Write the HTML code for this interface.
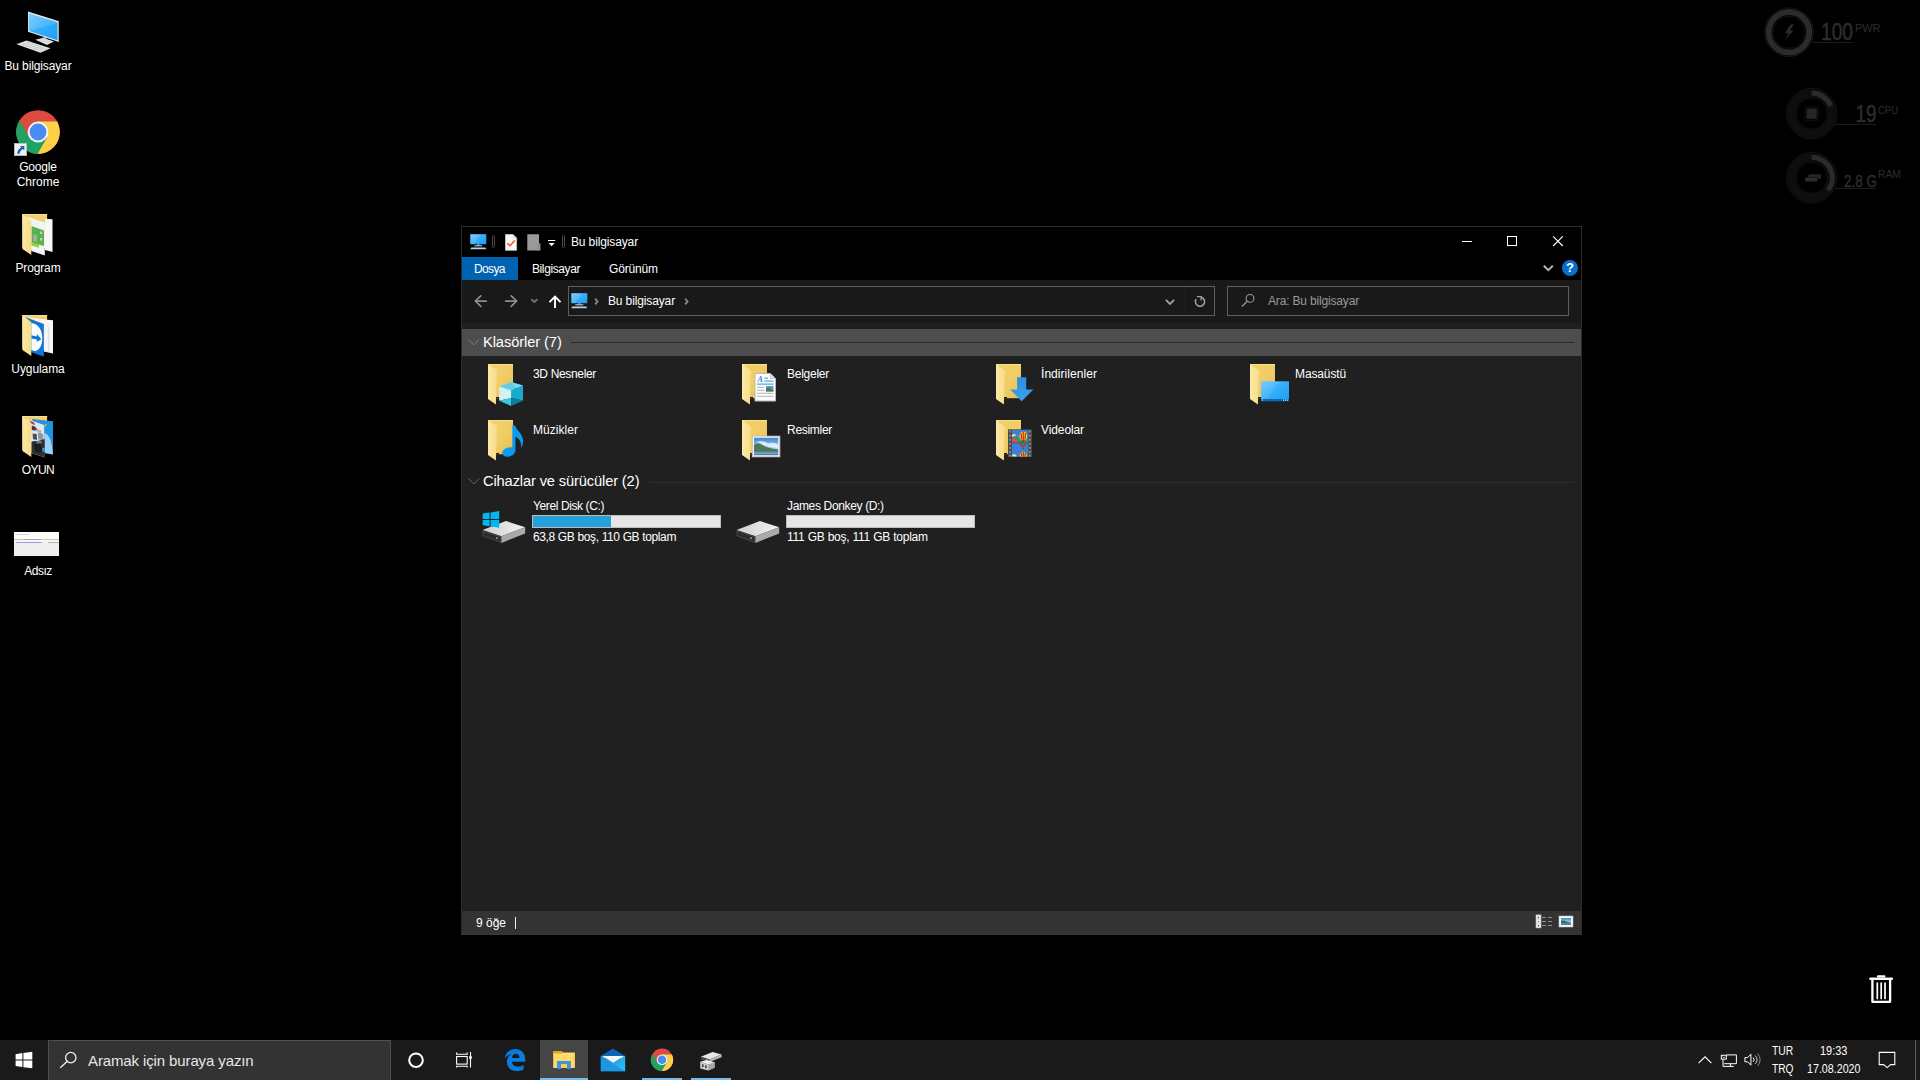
<!DOCTYPE html>
<html>
<head>
<meta charset="utf-8">
<title>Bu bilgisayar</title>
<style>
*{box-sizing:border-box;margin:0;padding:0}
html,body{width:1920px;height:1080px;overflow:hidden;background:#000;}
body{position:relative;font-family:"Liberation Sans",sans-serif;color:#fff;font-size:12px;-webkit-font-smoothing:antialiased}
.abs{position:absolute}
svg{position:absolute;overflow:visible}
/* desktop icons */
.dlabel{position:absolute;left:0;width:76px;text-align:center;font-size:12px;line-height:15px;color:#fff;text-shadow:0 1px 2px rgba(0,0,0,.9),1px 1px 1px rgba(0,0,0,.8);white-space:nowrap}
/* window */
#win{position:absolute;left:461px;top:226px;width:1121px;height:709px;border:1px solid #2b2b2b;border-bottom-color:#373737;background:#202020}
#title{position:absolute;left:0;top:0;width:1119px;height:30px;background:#000}
#ribbon{position:absolute;left:0;top:30px;width:1119px;height:23px;background:#000}
#nav{position:absolute;left:0;top:53px;width:1119px;height:43px;background:#191919}
#status{position:absolute;left:0;top:684px;width:1119px;height:23px;background:#333}
.t12{position:absolute;font-size:12px;line-height:14px;white-space:nowrap;color:#fff}
.t15{position:absolute;font-size:14.7px;line-height:18px;white-space:nowrap;color:#fff}
/* taskbar */
#tb{position:absolute;left:0;top:1040px;width:1920px;height:40px;background:#1a1a1a}
</style>
</head>
<body>

<svg width="0" height="0" style="position:absolute">
<defs>
  <linearGradient id="gBack" x1="0" y1="0" x2="1" y2="1"><stop offset="0" stop-color="#f3d26c"/><stop offset="0.5" stop-color="#f0cd66"/><stop offset="1" stop-color="#e6bf57"/></linearGradient>
  <linearGradient id="gFlap" x1="0" y1="0" x2="1" y2="0"><stop offset="0" stop-color="#fde9a6"/><stop offset="1" stop-color="#f7dc88"/></linearGradient>
  <linearGradient id="gSky" x1="0" y1="0" x2="0" y2="1"><stop offset="0" stop-color="#3f86d2"/><stop offset="0.6" stop-color="#a9d3ee"/><stop offset="1" stop-color="#dfeef6"/></linearGradient>
  <linearGradient id="gMon" x1="0" y1="0" x2="1" y2="1"><stop offset="0" stop-color="#6cc7ff"/><stop offset="0.5" stop-color="#35aefb"/><stop offset="1" stop-color="#1b9df5"/></linearGradient>
  <linearGradient id="gDl" x1="0" y1="0" x2="0" y2="1"><stop offset="0" stop-color="#2b8fe4"/><stop offset="1" stop-color="#3fa2ee"/></linearGradient>
  <linearGradient id="gTop" x1="0" y1="0" x2="1" y2="0"><stop offset="0" stop-color="#cfcfcf"/><stop offset="1" stop-color="#f2f2f2"/></linearGradient>
  <linearGradient id="gMail" x1="0" y1="0" x2="1" y2="1"><stop offset="0" stop-color="#1a8fe0"/><stop offset="1" stop-color="#2fc3f2"/></linearGradient>

  <symbol id="pc16" viewBox="0 0 17 16" overflow="visible">
    <rect x="0.3" y="0.2" width="16" height="10" fill="url(#gMon)"/>
    <polygon points="0.3,0.2 11,0.2 4,10.2 0.3,10.2" fill="#fff" opacity=".12"/>
    <rect x="7.3" y="10.2" width="2" height="1.3" fill="#9fb6c8"/>
    <rect x="4.3" y="11.3" width="8" height="1" fill="#c9dbe8"/>
    <path d="M1.3,13.5 L15.3,13.5 L16.3,15.2 L0.3,15.2 Z" fill="#b9d3e8"/>
  </symbol>

  <symbol id="bigfolder" viewBox="0 0 48 54" overflow="visible">
    <rect x="14.3" y="8" width="24.8" height="34" fill="#f1d06c"/>
    <rect x="14.3" y="8" width="24.8" height="1.2" fill="#f9e08f"/>
  </symbol>
  <symbol id="bigflap" viewBox="0 0 48 54" overflow="visible">
    <polygon points="14.3,8.3 23.3,15 23.3,49 14.5,43" fill="url(#gFlap)"/>
  </symbol>
  <symbol id="folder" viewBox="0 0 40 44" overflow="visible">
    <rect x="1" y="1" width="25" height="34.2" fill="url(#gBack)"/>
    <rect x="1" y="1" width="25" height="1" fill="#f8df8c"/>
    <polygon points="9,34 12,34 12,35.2 9,35.2" fill="#1a1a1a"/>
    <polygon points="1,1.2 9.9,7.3 8.9,41.6 1,36" fill="url(#gFlap)"/>
  </symbol>
  <symbol id="drive" viewBox="0 0 46 24" overflow="visible">
    <polygon points="0.5,9.9 24,1 43.2,7.2 19.4,16.3" fill="url(#gTop)"/>
    <polygon points="0.5,9.9 19.4,16.3 19.4,22.9 0.5,16.3" fill="#444"/>
    <polygon points="1.8,11.7 18.2,17.3 18.2,21.2 1.8,15.5" fill="#2b2b2b"/>
    <polygon points="19.4,16.3 43.2,7.2 43.2,13.6 19.4,22.9" fill="#a9a9a9"/>
    <rect x="14" y="17.4" width="1.9" height="1.5" fill="#3fe03f"/>
  </symbol>
</defs>
</svg>

<!-- ================= DESKTOP ICONS ================= -->
<div id="desk">

<!-- Bu bilgisayar icon -->
<svg style="left:8px;top:4px" width="60" height="54" viewBox="0 0 60 54">
  <polygon points="20,7.5 51,17.25 51,38 20,27.75" fill="#e9e9e9"/>
  <polygon points="50,17 51,17.25 51,38 50,37.7" fill="#a8a8a8"/>
  <polygon points="20.75,9.25 49.5,18.25 49.5,36.25 20.75,27" fill="url(#gMon)"/>
  <polygon points="20.75,9.25 49.5,18.25 49.5,19 24,26 20.75,27" fill="#fff" opacity=".13"/>
  <polygon points="27.25,35.75 35,33.75 46,37.5 39,41" fill="#d9dde0"/>
  <polygon points="35.5,33.9 38.5,34.9 38.5,32.4 35.5,31.5" fill="#c9cdd0"/>
  <polygon points="8.5,40.25 18.5,36.5 42.5,44.25 32.5,48.75" fill="#e4e6e8"/>
  <g stroke="#b9bdc1" stroke-width=".45" fill="none">
    <path d="M11,39.3 L35,47.6 M13.5,38.4 L37.5,46.5 M16,37.4 L40,45.4"/>
    <path d="M12.5,41.7 L22.5,37.9 M16.5,43 L26.5,39.2 M20.5,44.4 L30.5,40.5 M24.5,45.8 L34.5,41.8 M28.5,47.2 L38.5,43"/>
  </g>
</svg>
<!-- Chrome icon -->
<svg style="left:16px;top:110px" width="44" height="44" viewBox="0 0 44 44"><circle cx="22" cy="22" r="21.8" fill="#dd4b3e"/><path d="M41.16,11.60 A21.8,21.8 0 0 1 21.43,43.79 L31.01,27.20 L22,22 L22.00,11.60 Z" fill="#fdd04a"/><path d="M21.43,43.79 A21.8,21.8 0 0 1 3.41,10.61 L12.99,27.20 L22,22 L31.01,27.20 Z" fill="#1ea362"/><circle cx="22" cy="22" r="10.4" fill="#f4f4f4"/><circle cx="22" cy="22" r="8.4" fill="#4a8af4"/></svg>
<svg style="left:14px;top:143px" width="13" height="13" viewBox="0 0 13 13">
  <rect x="0.4" y="0.4" width="12.2" height="12.2" fill="#f0f0f0" stroke="#bdbdbd" stroke-width=".8"/>
  <path d="M6,3 L10.3,3 L10.3,7.3 L8.8,5.9 C7,7 5.8,8.6 5.6,10.8 L3.2,10.8 C3.3,7.8 4.8,5.6 7.3,4.4 Z" fill="#1c5fb8"/>
</svg>
<!-- Program -->
<svg style="left:8px;top:206px" width="48" height="54" viewBox="0 0 48 54">
  <use href="#bigfolder"/>
  <polygon points="37,12.8 44.5,13.3 44.5,46 37,44" fill="#f7f7f7"/>
  <polygon points="19,10.8 36.8,16.5 36.8,49.5 23.3,45" fill="#f3f3f3"/>
  <polygon points="23.5,20 36,24.5 36,40 30.8,38.5 30.8,41.5 23.5,39.2" fill="#55b54a"/>
  <polygon points="23.5,36 30.8,38.3 30.8,41.5 23.5,39.2" fill="#8ed23c"/>
  <polygon points="25.2,28 29,29.2 29,36 25.2,34.8" fill="#a9a9a9"/>
  <rect x="32" y="25.6" width="2.2" height="2.4" fill="#c9c9c9"/>
  <rect x="32" y="32" width="2.2" height="2.4" fill="#c9c9c9"/>
  <use href="#bigflap"/>
</svg>
<!-- Uygulama -->
<svg style="left:8px;top:307px" width="48" height="54" viewBox="0 0 48 54">
  <use href="#bigfolder"/>
  <polygon points="19.5,10 37,12.6 45,13.3 45,46.5 35.6,44.4 35.6,17" fill="#f5f5f5"/>
  <path d="M38.8,18.5 L40.6,20.5 L40.6,44.5 L37.5,43.8" fill="none" stroke="#d2d2d2" stroke-width=".7"/>
  <polygon points="18,10.5 35.8,17 35.8,49.5 23.3,45.2" fill="#0f76dd"/>
  <path d="M23.3,16.2 C30,16 34.3,23 34.3,31.5 C34.3,39 30.5,44 27,44 C25.5,44 24,43.3 23.3,42.5 Z" fill="#fff"/>
  <path d="M23.3,28.2 L28.8,29.6 L28.8,26.8 L33.3,32.2 L28.8,35 L28.8,32.6 L23.3,31.4 Z" fill="#0f76dd"/>
  <use href="#bigflap"/>
</svg>
<!-- OYUN -->
<svg style="left:8px;top:408px" width="48" height="54" viewBox="0 0 48 54">
  <use href="#bigfolder"/>
  <polygon points="24,11 45,13.3 45,46.5 36.5,45" fill="#1f93e4"/>
  <path d="M36.5,25 C40,26 42.5,30 43.5,36 C44,40 44.5,43 45,46.5 L36.8,45 Z" fill="#cfe6f6" opacity=".75"/>
  <polygon points="18.5,10.8 36,17 37,49.5 23.3,45" fill="#e2e7eb"/>
  <polygon points="21,12.5 26,14.3 27.2,17 23.6,16" fill="#d9353f"/>
  <polygon points="26.4,19.4 29,20.2 29,22.2 26.4,21.4" fill="#c4242c"/>
  <polygon points="23.6,17.5 27.5,18.8 27.8,22.8 23.6,22" fill="#3a3e42"/>
  <polygon points="24.6,25.4 28.8,26 29,32 25,31.2" fill="#4b5055"/>
  <polygon points="30,24.5 35,25.8 35.4,32 30.2,31.4" fill="#8d979e"/>
  <polygon points="28.6,21 33.5,22.5 33,25 29,24.6" fill="#aab3b9"/>
  <path d="M23.3,34 C26,32 29,34 32,32.2 L36.7,31 L37,49.5 L23.3,45 Z" fill="#2d3236"/>
  <path d="M26,36 L31,35 L34,39 L33,45 L27,43.5 Z" fill="#1b1d1f"/>
  <path d="M28,33 L33,32.4 L34,35 L29,35.8 Z" fill="#6f7a82"/>
  <path d="M34.4,40 L36.9,39.4 L37,44 L34.5,43.4 Z" fill="#2fa3c8"/>
  <rect x="36.6" y="15.6" width="1.5" height="3" fill="#e4b21d" transform="rotate(30 37.3 17)"/>
  <use href="#bigflap"/>
</svg>
<!-- Adsız thumbnail -->
<div class="abs" style="left:14px;top:532px;width:45px;height:24px;background:#efefef"></div>
<div class="abs" style="left:14px;top:532px;width:45px;height:7px;background:#fdfdfd"></div>
<div class="abs" style="left:15px;top:534px;width:14px;height:1px;background:#d5d5d5"></div>
<div class="abs" style="left:14px;top:539px;width:45px;height:1px;background:#c9c99a"></div>
<div class="abs" style="left:24px;top:539px;width:17px;height:1px;background:#a9a9a9"></div>
<div class="abs" style="left:14px;top:540px;width:45px;height:2px;background:#f6f6f6"></div>
<div class="abs" style="left:16px;top:542px;width:26px;height:1px;background:#9d9de0"></div>
<div class="abs" style="left:48px;top:542px;width:11px;height:1px;background:#b5b5b5"></div>
<div class="dlabel" style="top:59px;letter-spacing:-0.130px">Bu bilgisayar</div>
<div class="dlabel" style="top:160px;letter-spacing:-0.180px">Google</div>
<div class="dlabel" style="top:175px;">Chrome</div>
<div class="dlabel" style="top:261px;letter-spacing:-0.140px">Program</div>
<div class="dlabel" style="top:362px;letter-spacing:-0.090px">Uygulama</div>
<div class="dlabel" style="top:463px;letter-spacing:-0.600px">OYUN</div>
<div class="dlabel" style="top:564px;letter-spacing:-0.500px">Adsız</div>
</div>


<!-- ===== widgets ===== -->
<svg style="left:1760px;top:0" width="160" height="215" viewBox="1760 0 160 215">
  <g font-family="Liberation Sans, sans-serif">
  <!-- PWR -->
  <circle cx="1789" cy="32.2" r="24.4" fill="none" stroke="#161616" stroke-width="1"/>
  <circle cx="1789" cy="32.2" r="20.3" fill="none" stroke="#2b2b2b" stroke-width="6"/>
  <circle cx="1789" cy="32.2" r="16.2" fill="none" stroke="#151515" stroke-width="1"/>
  <path d="M1790.5,24.5 L1784.8,33.2 L1788.6,33.2 L1785,40 L1793.6,30.5 L1789.8,30.5 L1794,24.5 Z" fill="#2b2b2b"/>
  <rect x="1812" y="42" width="41" height="1" fill="#1c1c1c"/>
  <text x="1821" y="39.6" font-size="23" fill="#2d2d2d" stroke="#2d2d2d" stroke-width=".5" textLength="32" lengthAdjust="spacingAndGlyphs">100</text>
  <text x="1855" y="31.6" font-size="10.5" fill="#2d2d2d" textLength="25.5" lengthAdjust="spacingAndGlyphs">PWR</text>
  <!-- CPU -->
  <circle cx="1811.7" cy="113.6" r="25.3" fill="none" stroke="#131313" stroke-width="1"/>
  <circle cx="1811.7" cy="113.6" r="20.5" fill="none" stroke="#0e0e0e" stroke-width="8"/>
  <path d="M1811.7,93.1 A20.5,20.5 0 0 1 1830.8,106.1" fill="none" stroke="#2b2b2b" stroke-width="5"/>
  <circle cx="1811.7" cy="113.6" r="15.8" fill="none" stroke="#151515" stroke-width="1"/>
  <rect x="1805.2" y="107.2" width="13" height="13" fill="none" stroke="#242424" stroke-width="1" stroke-dasharray="1 1"/>
  <rect x="1806.6" y="108.6" width="10.2" height="10.2" fill="#262626"/>
  <rect x="1835" y="124" width="41" height="1" fill="#1c1c1c"/>
  <text x="1855.5" y="121.8" font-size="23.5" fill="#2d2d2d" stroke="#2d2d2d" stroke-width=".5" textLength="21" lengthAdjust="spacingAndGlyphs">19</text>
  <text x="1878" y="113.6" font-size="10.5" fill="#2d2d2d" textLength="20" lengthAdjust="spacingAndGlyphs">CPU</text>
  <!-- RAM -->
  <circle cx="1811.7" cy="177.8" r="25.3" fill="none" stroke="#131313" stroke-width="1"/>
  <circle cx="1811.7" cy="177.8" r="20.5" fill="none" stroke="#0e0e0e" stroke-width="8"/>
  <path d="M1811.7,157.3 A20.5,20.5 0 0 1 1828,190.3" fill="none" stroke="#2b2b2b" stroke-width="5"/>
  <circle cx="1811.7" cy="177.8" r="15.8" fill="none" stroke="#151515" stroke-width="1"/>
  <rect x="1808.5" y="174.3" width="12.5" height="4.6" fill="#262626"/>
  <rect x="1805" y="177.2" width="12.5" height="4.6" fill="#2b2b2b" stroke="#0a0a0a" stroke-width=".5"/>
  <rect x="1835" y="188" width="41" height="1" fill="#1c1c1c"/>
  <text x="1844" y="187" font-size="16" fill="#2d2d2d" stroke="#2d2d2d" stroke-width=".4" textLength="33" lengthAdjust="spacingAndGlyphs">2.8 G</text>
  <text x="1878" y="177.8" font-size="10.5" fill="#2d2d2d" textLength="23" lengthAdjust="spacingAndGlyphs">RAM</text>
  </g>
</svg>
<!-- recycle bin -->
<svg style="left:1867px;top:973px" width="28" height="32" viewBox="0 0 28 32">
  <g fill="none" stroke="#fff">
    <path d="M3.4,5.8 L24.8,5.8" stroke-width="2.5" stroke-linecap="round"/>
    <path d="M11,3.4 L17.4,3.4" stroke-width="2.2" stroke-linecap="round"/>
    <path d="M5.4,6.5 L5.4,28.8 L23.1,28.8 L23.1,6.5" stroke-width="2.3" stroke-linejoin="round"/>
    <path d="M10.3,10 L10.3,25.5 M14.2,10 L14.2,25.5 M18,10 L18,25.5" stroke-width="1.7" stroke-linecap="round"/>
  </g>
</svg>

<!-- ================= EXPLORER WINDOW ================= -->
<div id="win">
  <div id="title">

    <svg style="left:8px;top:7px" width="17" height="16"><use href="#pc16"/></svg>
    <div class="abs" style="left:30px;top:8px;width:3px;height:13px;border:1px solid #4a4a4a;border-radius:1.5px"></div>
    <svg style="left:43px;top:7px" width="13" height="17" viewBox="0 0 13 17">
      <polygon points="0.5,0.5 8,0.5 11.6,4.1 11.6,16.3 0.5,16.3" fill="#f7f7f7" stroke="#c8c8c8" stroke-width=".8"/>
      <polygon points="8,0.5 11.6,4.1 8,4.1" fill="#d9d9d9"/>
      <path d="M2.4,9.4 L5,11.8 L9.7,6.4" fill="none" stroke="#f0561d" stroke-width="1.5"/>
    </svg>
    <svg style="left:65px;top:7px" width="14" height="17" viewBox="0 0 14 17">
      <path d="M0.3,0.3 L12,0.3 L12,9.5 L13.4,9.5 L13.4,16.5 L0.3,16.5 Z" fill="#9a9a9a"/>
      <path d="M10.5,10.5 L12.2,9.6 L12.2,16.5 L10.5,16.5 Z" fill="#8a8a8a"/>
    </svg>
    <svg style="left:86px;top:13px" width="8" height="8" viewBox="0 0 8 8">
      <rect x="0" y="0" width="7.2" height="1" fill="#fff"/>
      <polygon points="0.6,3 6.6,3 3.6,6.2" fill="#fff"/>
    </svg>
    <div class="abs" style="left:100px;top:8px;width:3px;height:13px;border:1px solid #4a4a4a;border-radius:1.5px"></div>
    <!-- window controls -->
    <div class="abs" style="left:1000px;top:14px;width:10px;height:1px;background:#fff"></div>
    <div class="abs" style="left:1045px;top:9px;width:10px;height:10px;border:1px solid #fff"></div>
    <svg style="left:1090px;top:9px" width="11" height="11" viewBox="0 0 11 11"><path d="M1.1,0.3 L10.8,10 M10.8,0.3 L1.1,10" stroke="#fff" stroke-width="1.1" fill="none"/></svg>
    <div class="t12" style="left:109px;top:8px;letter-spacing:-0.130px">Bu bilgisayar</div>
  </div>
  <div id="ribbon">

    <svg style="left:1081px;top:8px" width="11" height="7" viewBox="0 0 11 7"><path d="M0.8,0.8 L5.3,5.2 L9.8,0.8" fill="none" stroke="#b4b4b4" stroke-width="2"/></svg>
    <div class="abs" style="left:1100px;top:3px;width:16px;height:16px;border-radius:8px;background:#0a6ccc"></div>
    <div class="abs" style="left:1100px;top:3px;width:16px;height:16px;text-align:center;font-weight:bold;font-size:13px;line-height:16px;color:#fff">?</div>
    <div class="abs" style="left:0;top:0;width:56px;height:23px;background:#0063b1"></div>
    <div class="t12" style="left:12px;top:5px;letter-spacing:-0.650px">Dosya</div>
    <div class="t12" style="left:70px;top:5px;letter-spacing:-0.400px">Bilgisayar</div>
    <div class="t12" style="left:147px;top:5px;letter-spacing:-0.180px">Görünüm</div>
  </div>
  <div id="nav">

    <svg style="left:12px;top:14px" width="14" height="14" viewBox="0 0 14 14"><path d="M12.9,7.1 L1.4,7.1 M7.3,1.3 L1.4,7.1 L7.3,12.9" fill="none" stroke="#8c8c8c" stroke-width="1.7"/></svg>
    <svg style="left:42px;top:14px" width="14" height="14" viewBox="0 0 14 14"><path d="M1,7.1 L12.6,7.1 M6.7,1.3 L12.6,7.1 L6.7,12.9" fill="none" stroke="#8c8c8c" stroke-width="1.7"/></svg>
    <svg style="left:68px;top:17px" width="9" height="6" viewBox="0 0 9 6"><path d="M1.3,2.2 L4.35,4.9 L7.4,2.2" fill="none" stroke="#727272" stroke-width="1.9"/></svg>
    <svg style="left:86px;top:15px" width="14" height="14" viewBox="0 0 14 14"><path d="M7,13 L7,1.6 M1.5,7.2 L7,1.6 L12.5,7.2" fill="none" stroke="#fff" stroke-width="1.9"/></svg>
    <div class="abs" style="left:106px;top:6px;width:647px;height:30px;border:1px solid #5f5f5f;background:#191919"></div>
    <div class="abs" style="left:765px;top:6px;width:342px;height:30px;border:1px solid #5f5f5f;background:#191919"></div>

    <svg style="left:109px;top:13px" width="17" height="16"><use href="#pc16"/></svg>
    <svg style="left:132px;top:17px" width="5" height="9" viewBox="0 0 5 9"><path d="M1.1,1.6 L3.6,4.45 L1.1,7.3" fill="none" stroke="#8a8a8a" stroke-width="1.8"/></svg>
    <svg style="left:222px;top:17px" width="5" height="9" viewBox="0 0 5 9"><path d="M1.1,1.6 L3.6,4.45 L1.1,7.3" fill="none" stroke="#8a8a8a" stroke-width="1.8"/></svg>
    <svg style="left:703px;top:19px" width="10" height="7" viewBox="0 0 10 7"><path d="M0.8,0.8 L5,5 L9.2,0.8" fill="none" stroke="#a0a0a0" stroke-width="1.9"/></svg>
    <div class="abs" style="left:722px;top:7px;width:1px;height:28px;background:#1f1f1f"></div>
    <svg style="left:732px;top:14px" width="13" height="14" viewBox="0 0 13 14">
      <path d="M7.3,3.2 A4.6,4.6 0 1 1 2.1,5.2" fill="none" stroke="#a0a0a0" stroke-width="1.6"/>
      <path d="M2.9,2.7 L7.1,2.7 L7.1,6.6" fill="none" stroke="#a0a0a0" stroke-width="1.3"/>
    </svg>
    <svg style="left:779px;top:13px" width="14" height="15" viewBox="0 0 14 15">
      <circle cx="9" cy="5.4" r="3.9" fill="none" stroke="#9a9a9a" stroke-width="1.1"/>
      <path d="M6.3,8.3 L0.8,13.5" stroke="#9a9a9a" stroke-width="1.2" fill="none"/>
    </svg>
    <div class="t12" style="left:146px;top:14px;letter-spacing:-0.130px">Bu bilgisayar</div>
    <div class="t12" style="left:806px;top:14px;color:#9a9a9a;letter-spacing:-0.170px">Ara: Bu bilgisayar</div>
  </div>
  <!-- group header 1 -->
  <div class="abs" style="left:0;top:102px;width:1119px;height:27px;background:#4d4d4d"></div>
  <div class="t15" style="left:21px;top:106px;letter-spacing:-0.100px">Klasörler (7)</div>
  <div class="abs" style="left:109px;top:115px;width:1003px;height:1px;background:#2b2b2b"></div>

  <svg style="left:6px;top:112px" width="12" height="7" viewBox="0 0 12 7"><path d="M0.5,0.6 L5.8,5.9 L11.1,0.6" fill="none" stroke="#7f7f7f" stroke-width="1"/></svg>
  <svg style="left:6px;top:251px" width="12" height="7" viewBox="0 0 12 7"><path d="M0.5,0.6 L5.8,5.9 L11.1,0.6" fill="none" stroke="#6a6a6a" stroke-width="1"/></svg>
  <!-- group header 2 -->
  <div class="t15" style="left:21px;top:245px;letter-spacing:-0.144px">Cihazlar ve sürücüler (2)</div>
  <div class="abs" style="left:187px;top:255px;width:925px;height:1px;background:#2c2c2c"></div>

  <div id="items">
<svg style="left:25px;top:136px" width="40" height="44" viewBox="0 0 40 44"><use href="#folder"/><g transform="translate(0,0)">
 <polygon points="24.1,19 36,22.5 24.1,27.5 12.2,23.5" fill="#62cfe6"/>
 <polygon points="12.2,23.5 24.1,27.5 24.1,35 12.2,37.8" fill="#d2f1f7"/>
 <polygon points="24.1,27.5 36,22.5 36,37.8 24.1,35" fill="#17abcc"/>
 <polygon points="12.2,37.8 24.1,35 24.1,42.9" fill="#3fc6dd"/>
 <polygon points="24.1,35 36,37.8 24.1,42.9" fill="#0d7d9d"/>
 <polygon points="24.1,19 36,22.5 30,25" fill="#8fdff0" opacity=".6"/>
</g></svg>
<div class="t12" style="left:71px;top:140px;letter-spacing:-0.340px">3D Nesneler</div>
<svg style="left:279px;top:136px" width="40" height="44" viewBox="0 0 40 44"><use href="#folder"/><g>
 <polygon points="14,10.5 29.5,10.5 34.5,15.5 34.5,38 14,38" fill="#fcfcfc" stroke="#b9b9b9" stroke-width="1"/>
 <polygon points="29.5,10.5 34.5,15.5 29.5,15.5" fill="#dcdcdc" stroke="#b9b9b9" stroke-width=".7"/>
 <text x="16.5" y="19.3" font-family="Liberation Serif" font-style="italic" font-weight="bold" font-size="8" fill="#1e88d8">A</text>
 <rect x="23.5" y="14.6" width="3.5" height="1" fill="#2a94e0"/>
 <rect x="23.5" y="17.6" width="9" height="1" fill="#2a94e0"/>
 <rect x="16" y="20.6" width="16.5" height="1" fill="#2a94e0"/>
 <rect x="16" y="23.8" width="7.5" height="1" fill="#b5b5b5"/>
 <rect x="16" y="26.8" width="7.5" height="1" fill="#b5b5b5"/>
 <rect x="16" y="29.8" width="16.5" height="1" fill="#b5b5b5"/>
 <rect x="16" y="32.8" width="16.5" height="1" fill="#b5b5b5"/>
 <rect x="25" y="23" width="7.5" height="5.5" fill="#5b9bd0"/>
 <polygon points="25,28.5 25,25.5 28,24.5 32.5,27.5 32.5,28.5" fill="#4c7a5a"/>
</g></svg>
<div class="t12" style="left:325px;top:140px;letter-spacing:-0.250px">Belgeler</div>
<svg style="left:533px;top:136px" width="40" height="44" viewBox="0 0 40 44"><use href="#folder"/><g>
 <polygon points="22.1,14.2 31.2,14.2 31.2,26.5 38.4,26.5 26.7,38.2 15,26.5 22.1,26.5" fill="url(#gDl)"/>
</g></svg>
<div class="t12" style="left:579px;top:140px;letter-spacing:0.050px">İndirilenler</div>
<svg style="left:787px;top:136px" width="40" height="44" viewBox="0 0 40 44"><use href="#folder"/><g>
 <rect x="12" y="18.3" width="28" height="19.8" fill="url(#gMon)"/>
 <polygon points="12,18.3 30,18.3 18,36 12,36" fill="#fff" opacity=".08"/>
 <rect x="12" y="36" width="28" height="2.1" fill="#0c6ab8"/>
 <rect x="12.8" y="36.6" width="1" height="1" fill="#fff"/>
 <rect x="34" y="36.6" width="1" height="1" fill="#fff"/><rect x="36" y="36.6" width="1" height="1" fill="#fff"/><rect x="38" y="36.6" width="1" height="1" fill="#fff"/>
</g></svg>
<div class="t12" style="left:833px;top:140px;letter-spacing:-0.120px">Masaüstü</div>
<svg style="left:25px;top:192px" width="40" height="44" viewBox="0 0 40 44"><use href="#folder"/><g fill="#0b9bf1">
 <ellipse cx="21.7" cy="33" rx="6.6" ry="4.6" transform="rotate(-18 21.7 33)"/>
 <path d="M25.4,6.5 L27.8,6.2 C29.5,11 36,14.5 36,22 C36,25.5 35,28 34,29.3 C34.8,25 33.5,20.5 28.5,17.5 L28.3,33 L25.2,33 Z"/>
</g></svg>
<div class="t12" style="left:71px;top:196px;letter-spacing:0.030px">Müzikler</div>
<svg style="left:279px;top:192px" width="40" height="44" viewBox="0 0 40 44"><use href="#folder"/><g>
 <rect x="11.3" y="17.1" width="27.6" height="20.8" fill="#f4f4f4" stroke="#bdbdbd" stroke-width=".8"/>
 <rect x="13" y="18.8" width="24.2" height="17.4" fill="url(#gSky)"/>
 <path d="M13,26.5 C16,23.5 19,24.5 22,26.5 C26,29 31,29.5 37.2,30.5 L37.2,32 L13,32 Z" fill="#4d7a52"/>
 <path d="M15,23.5 C19,21 24,22.5 27,24.5 C31,23 35,24 37.2,25.5 L37.2,29 C32,28.5 27,28 22.5,26 C19,24 17,23.5 15,23.5 Z" fill="#eef5fb" opacity=".85"/>
 <rect x="13" y="32" width="24.2" height="4.2" fill="#4f7eab"/>
 <rect x="13" y="33.5" width="24.2" height="1.4" fill="#9ab9d3" opacity=".7"/>
</g></svg>
<div class="t12" style="left:325px;top:196px;letter-spacing:-0.290px">Resimler</div>
<svg style="left:533px;top:192px" width="40" height="44" viewBox="0 0 40 44"><use href="#folder"/><g>
 <rect x="13" y="10.3" width="23.9" height="27.7" fill="#4b4b4b"/>
 <g fill="#8a8a8a">
  <rect x="14.2" y="11.5" width="1.8" height="2"/><rect x="14.2" y="15.6" width="1.8" height="2"/><rect x="14.2" y="19.7" width="1.8" height="2"/><rect x="14.2" y="23.8" width="1.8" height="2"/><rect x="14.2" y="27.9" width="1.8" height="2"/><rect x="14.2" y="32" width="1.8" height="2"/><rect x="14.2" y="35.6" width="1.8" height="2"/>
  <rect x="34" y="11.5" width="1.8" height="2"/><rect x="34" y="15.6" width="1.8" height="2"/><rect x="34" y="19.7" width="1.8" height="2"/><rect x="34" y="23.8" width="1.8" height="2"/><rect x="34" y="27.9" width="1.8" height="2"/><rect x="34" y="32" width="1.8" height="2"/><rect x="34" y="35.6" width="1.8" height="2"/>
 </g>
 <rect x="17" y="11" width="16.3" height="12.2" fill="#3f7fd8"/>
 <rect x="17" y="24.2" width="16.3" height="13.3" fill="#3f7fd8"/>
 <path d="M17,18 C19,16 21,17 23,19 L25,21 L33.3,21 L33.3,23.2 L17,23.2 Z" fill="#3a9a4a"/>
 <path d="M17,16 C18.5,14.5 20,15 21.5,16.5 C20,16.5 18.5,17 17,18 Z" fill="#e9e2b0"/>
 <path d="M17,20 C19,18.5 21,19.5 22.5,21.5 L22.5,23.2 L17,23.2 Z" fill="#d8476a"/>
 <ellipse cx="28.3" cy="17" rx="3.9" ry="4.2" fill="#f2c61c"/>
 <path d="M26,14 L26.8,20.5 M28.3,13 L28.3,21 M30.6,14 L29.8,20.5" stroke="#c42626" stroke-width="1.1" fill="none"/>
 <rect x="27.4" y="21.5" width="1.8" height="1.4" fill="#5a3a1a"/>
 <path d="M25,24.2 L31.5,24.2 C31.5,26.5 29.8,28 28.3,28 C26.8,28 25,26.5 25,24.2 Z" fill="#d8262f"/>
 <path d="M26.5,24.2 L29.8,24.2 L28.3,28 Z" fill="#2f9b3c"/>
 <rect x="27.6" y="28.6" width="1.4" height="1.2" fill="#5a3a1a"/>
 <path d="M24.6,37.5 C24.6,34.5 26.5,32.8 28.3,32.8 C30.2,32.8 32,34.5 32,37.5 Z" fill="#f2c61c"/>
 <path d="M26.4,34 L26.6,37.5 M28.3,33 L28.3,37.5 M30.3,34 L30,37.5" stroke="#c42626" stroke-width="1.1" fill="none"/>
 <path d="M17,36 C18.5,34.5 20,35 21.5,36.5 L21.5,37.5 L17,37.5 Z" fill="#e9e2b0"/>
</g></svg>
<div class="t12" style="left:579px;top:196px;letter-spacing:-0.100px">Videolar</div>

<svg style="left:20px;top:293px" width="46" height="24" viewBox="0 0 46 24"><use href="#drive"/></svg>
<svg style="left:20px;top:284px" width="18" height="18" viewBox="0 0 18 18">
  <g fill="#00b7f1">
   <polygon points="0.7,2.6 7.6,1.6 7.6,7.9 0.7,7.9"/>
   <polygon points="8.6,1.4 17.2,0.1 17.2,7.9 8.6,7.9"/>
   <polygon points="0.7,8.9 7.6,8.9 7.6,15.2 0.7,14.2"/>
   <polygon points="8.6,8.9 17.2,8.9 17.2,16.8 8.6,15.4"/>
  </g>
</svg>
<div class="t12" style="left:71px;top:272px;letter-spacing:-0.390px">Yerel Disk (C:)</div>
<div class="abs" style="left:70px;top:288px;width:189px;height:13px;background:#e6e6e6;border:1px solid #bcbcbc"></div>
<div class="abs" style="left:71px;top:289px;width:78px;height:11px;background:#26a0da"></div>
<div class="t12" style="left:71px;top:303px;letter-spacing:-0.365px">63,8 GB boş, 110 GB toplam</div>
<svg style="left:274px;top:293px" width="46" height="24" viewBox="0 0 46 24"><use href="#drive"/></svg>
<div class="t12" style="left:325px;top:272px;letter-spacing:-0.350px">James Donkey (D:)</div>
<div class="abs" style="left:324px;top:288px;width:189px;height:13px;background:#e6e6e6;border:1px solid #bcbcbc"></div>
<div class="t12" style="left:325px;top:303px;letter-spacing:-0.230px">111 GB boş, 111 GB toplam</div>
</div>

  <div id="status">

    <svg style="left:1073px;top:3px" width="18" height="15" viewBox="0 0 18 15">
      <rect x="1" y="0.9" width="5" height="13" fill="#f2f2f2" stroke="#bdbdbd" stroke-width=".6"/>
      <path d="M1,5.2 L6,5.2 M1,9.3 L6,9.3" stroke="#bdbdbd" stroke-width=".6"/>
      <circle cx="3.5" cy="3.4" r=".8" fill="#3f7d5a"/><circle cx="3.5" cy="7.5" r=".8" fill="#4a8af4"/><circle cx="3.5" cy="11.6" r=".8" fill="#d32020"/>
      <g fill="#8c8c8c"><rect x="7" y="3" width="4" height="1"/><rect x="13" y="3" width="4" height="1"/><rect x="7" y="7" width="4" height="1"/><rect x="13" y="7" width="4" height="1"/><rect x="7" y="11" width="4" height="1"/><rect x="13" y="11" width="4" height="1"/></g>
    </svg>
    <svg style="left:1096px;top:4px" width="16" height="13" viewBox="0 0 16 13">
      <rect x="1" y="1" width="14" height="11" fill="#fafafa" stroke="#bdbdbd" stroke-width=".6"/>
      <rect x="3" y="3" width="10" height="7" fill="url(#gSky)"/>
      <path d="M3,6 C5,4.8 7,5.5 9,6.8 L13,7.8 L13,8.6 L3,8.6 Z" fill="#3f6b4a"/>
      <rect x="3" y="8.4" width="10" height="1.6" fill="#3f79b3"/>
    </svg>
    <div class="t12" style="left:14px;top:5px;">9 öğe</div>
    <div class="abs" style="left:53px;top:6px;width:1px;height:12px;background:#f0f0f0"></div>
  </div>
</div>

<!-- ================= TASKBAR ================= -->
<div id="tb">
  <div class="abs" style="left:48px;top:0;width:343px;height:40px;background:#333;border:1px solid #4f4f4f;border-bottom:none"></div>
  <div class="abs" style="left:88px;top:12px;font-size:15px;line-height:18px;color:#e6e6e6;white-space:nowrap;letter-spacing:-0.120px">Aramak için buraya yazın</div>
  <div class="abs" style="left:540px;top:0;width:48px;height:40px;background:#454545"></div>
  <div class="abs" style="left:540px;top:38px;width:48px;height:2px;background:#76b9ed"></div>
  <div class="abs" style="left:642px;top:38px;width:40px;height:2px;background:#76b9ed"></div>
  <div class="abs" style="left:691px;top:38px;width:40px;height:2px;background:#76b9ed"></div>

  <!-- start -->
  <svg style="left:15px;top:11px" width="18" height="18" viewBox="0 0 18 18">
    <g fill="#fff">
      <polygon points="0.6,3.2 7.4,2.1 7.4,8.5 0.6,8.5"/>
      <polygon points="8.4,1.9 17.3,0.7 17.3,8.5 8.4,8.5"/>
      <polygon points="0.6,9.5 7.4,9.5 7.4,16 0.6,14.9"/>
      <polygon points="8.4,9.5 17.3,9.5 17.3,17.3 8.4,16.2"/>
    </g>
  </svg>
  <!-- search icon -->
  <svg style="left:59px;top:11px" width="19" height="18" viewBox="0 0 19 18">
    <circle cx="11.8" cy="6.6" r="5.2" fill="none" stroke="#ededed" stroke-width="1.3"/>
    <path d="M8,10.5 L1.3,16.7" stroke="#ededed" stroke-width="1.4" fill="none"/>
  </svg>
  <!-- cortana -->
  <svg style="left:407px;top:11px" width="18" height="18" viewBox="0 0 18 18"><circle cx="9" cy="9.2" r="6.8" fill="none" stroke="#fff" stroke-width="2"/></svg>
  <!-- task view -->
  <svg style="left:455px;top:11px" width="18" height="18" viewBox="0 0 18 18">
    <g fill="none" stroke="#fff" stroke-width="1.1">
      <rect x="1.6" y="5.5" width="10.6" height="7.6"/>
      <path d="M1.6,1.6 L1.6,3.2 L12.2,3.2 L12.2,1.6"/>
      <path d="M1.6,16.6 L1.6,15.2 L12.2,15.2 L12.2,16.6"/>
      <path d="M15.5,1 L15.5,16.6"/>
    </g>
    <rect x="14.2" y="5.2" width="2.6" height="2.6" fill="#fff"/>
  </svg>
  <!-- edge -->
  <svg style="left:504px;top:8px" width="22" height="24" viewBox="0 0 22 24">
    <path d="M0.8,10.2 C1.5,4.5 6,0.9 11.3,0.9 C17.5,0.9 21.3,5.3 21.3,11.2 L21.3,13.8 L7.9,13.8 C8.2,17 10.8,18.6 13.8,18.6 C16,18.6 17.9,18 19.6,17 L19.6,21.5 C17.7,22.5 15.4,23 12.9,23 C7,23 2.9,19.5 2.9,13.8 C2.9,10.4 4.6,7.8 7.2,6.3 C5.2,6.7 2.6,8 0.8,10.2 Z M8,9.9 L15.5,9.9 C15.4,7.4 14,5.8 11.8,5.8 C9.7,5.8 8.3,7.5 8,9.9 Z" fill="#0a7cdb" fill-rule="evenodd"/>
  </svg>
  <!-- explorer -->
  <svg style="left:552px;top:10px" width="24" height="20" viewBox="0 0 24 20">
    <path d="M1.2,1.2 L9.6,1.2 L10.6,2.4 L22.9,2.4 L22.9,17.9 L1.2,17.9 Z" fill="#ffd866"/>
    <path d="M1.2,1.2 L9.6,1.2 L10.6,2.4 L9.4,3.7 L1.2,3.7 Z" fill="#e9a900"/>
    <rect x="1.2" y="3.7" width="21.7" height="1.2" fill="#ffe59a" opacity=".6"/>
    <path d="M5,11 L18.9,11 L18.9,19 L14.8,19 L14.8,14.2 L9,14.2 L9,19 L5,19 Z" fill="#3f93e0"/>
    <rect x="9" y="14.2" width="5.8" height="3.7" fill="#ffcf4d"/>
  </svg>
  <!-- mail -->
  <svg style="left:600px;top:8px" width="26" height="24" viewBox="0 0 26 24">
    <polygon points="0.8,7.9 12.8,0.6 25.2,7.9" fill="#0d63b5"/>
    <rect x="0.8" y="7.9" width="24.4" height="15.3" fill="url(#gMail)"/>
    <polygon points="0.8,7.9 25.2,23.2 0.8,23.2" fill="#1b93e2" opacity=".85"/>
    <polygon points="3,8.3 23.4,8.3 13.2,14.8" fill="#f4f4f4"/>
    <polygon points="3,8.3 23.4,8.3 23,9.4 3.4,9.4" fill="#fff"/>
  </svg>
  <!-- chrome -->
  <svg style="left:650px;top:8px" width="24" height="24" viewBox="0 0 24 24"><circle cx="12" cy="11.8" r="11.2" fill="#dd4b3e"/><path d="M21.87,6.50 A11.2,11.2 0 0 1 11.66,22.99 L16.59,14.45 L12,11.8 L12.00,6.50 Z" fill="#fdd04a"/><path d="M11.66,22.99 A11.2,11.2 0 0 1 2.48,5.91 L7.41,14.45 L12,11.8 L16.59,14.45 Z" fill="#1ea362"/><circle cx="12" cy="11.8" r="5.3" fill="#f4f4f4"/><circle cx="12" cy="11.8" r="4.2" fill="#4a8af4"/></svg>
  <!-- disk tool -->
  <svg style="left:699px;top:11px" width="24" height="21" viewBox="0 0 24 21">
    <polygon points="1.8,5.8 13.5,0.9 22.6,3.6 10.6,8.6" fill="#e6e6e6"/>
    <polygon points="1.8,5.8 10.6,8.6 10.6,11 1.8,8.2" fill="#4a4a4a"/>
    <polygon points="10.6,8.6 22.6,3.6 22.6,6.2 10.6,11" fill="#b5b5b5"/>
    <rect x="7" y="8.2" width="1.8" height="1" fill="#35d04a"/>
    <polygon points="1.2,10.8 9.3,13.5 15.6,11.3 15.6,16.8 9.3,19.6 1.2,17.4" fill="#cfcfcf"/>
    <polygon points="9.3,13.5 15.6,11.3 15.6,16.8 9.3,19.6" fill="#a6a6a6"/>
    <polygon points="1.2,10.8 7.5,9 15.6,11.3 9.3,13.5" fill="#ededed"/>
    <rect x="2.9" y="13.2" width="1.8" height="3" fill="#555"/>
    <rect x="6" y="14.2" width="1.8" height="3" fill="#555"/>
  </svg>

  <!-- tray -->
  <svg style="left:1698px;top:15px" width="14" height="9" viewBox="0 0 14 9"><path d="M0.6,8.2 L7,1.8 L13.4,8.2" fill="none" stroke="#fff" stroke-width="1.1"/></svg>
  <svg style="left:1720px;top:13px" width="18" height="15" viewBox="0 0 18 15">
    <g fill="none" stroke="#fff" stroke-width="1">
      <path d="M6.4,1.9 L16.4,1.9 L16.4,10.7 L4.2,10.7"/>
      <path d="M10.4,10.7 L10.4,13.4 M3,13.4 L13.8,13.4"/>
      <rect x="1.3" y="2.3" width="5" height="3.8"/>
      <path d="M3,6.1 L3,13.4"/>
      <path d="M2.6,3.6 L3.8,4.8 L5,3.6" stroke-width=".8"/>
    </g>
  </svg>
  <svg style="left:1744px;top:12px" width="19" height="16" viewBox="0 0 19 16">
    <path d="M0.9,5.6 L3.6,5.6 L6.9,2.2 L6.9,13.2 L3.6,9.8 L0.9,9.8 Z" fill="none" stroke="#fff" stroke-width="1"/>
    <path d="M9.2,5.6 A3,3 0 0 1 9.2,9.8" fill="none" stroke="#fff" stroke-width="1"/>
    <path d="M11.3,3.6 A5.6,5.6 0 0 1 11.3,11.8" fill="none" stroke="#cfcfcf" stroke-width="1"/>
    <path d="M13.6,1.6 A8.6,8.6 0 0 1 13.6,13.8" fill="none" stroke="#8a8a8a" stroke-width="1"/>
  </svg>
  <div class="t12" style="left:1772px;top:4px;transform:scaleX(.86);transform-origin:0 0">TUR</div>
  <div class="t12" style="left:1772px;top:22px;transform:scaleX(.85);transform-origin:0 0">TRQ</div>
  <div class="t12" style="left:1820px;top:4px;transform:scaleX(.91);transform-origin:0 0">19:33</div>
  <div class="t12" style="left:1807px;top:22px;transform:scaleX(.89);transform-origin:0 0">17.08.2020</div>
  <svg style="left:1878px;top:11px" width="18" height="18" viewBox="0 0 18 18">
    <path d="M1.2,1.4 L16.8,1.4 L16.8,13.6 L12.6,13.6 L9.2,16.6 L5.6,13.6 L1.2,13.6 Z" fill="none" stroke="#fff" stroke-width="1.1"/>
  </svg>
  <div class="abs" style="left:1915px;top:0;width:1px;height:40px;background:#5c5c5c"></div>
</div>

</body>
</html>
